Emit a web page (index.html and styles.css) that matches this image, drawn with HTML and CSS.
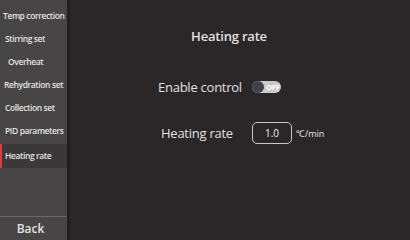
FILE: index.html
```html
<!DOCTYPE html>
<html>
<head>
<meta charset="utf-8">
<link rel="stylesheet" href="styles.css">
</head>
<body>
<div class="app">
  <nav class="sidebar">
    <ul class="menu">
      <li class="item pad-3">Temp correction</li>
      <li class="item pad-5">Stirring set</li>
      <li class="item pad-8">Overheat</li>
      <li class="item pad-4">Rehydration set</li>
      <li class="item pad-5">Collection set</li>
      <li class="item pad-5">PID parameters</li>
      <li class="item pad-5 active">Heating rate</li>
    </ul>
    <div class="back">Back</div>
  </nav>
  <main class="content">
    <h1 class="title">Heating rate</h1>
    <div class="row row-enable">
      <span class="label">Enable control</span>
      <span class="toggle"><span class="knob"></span><span class="toggle-text">OFF</span></span>
    </div>
    <div class="row row-rate">
      <span class="label">Heating rate</span>
      <span class="input">1.0</span>
      <span class="unit">℃/min</span>
    </div>
  </main>
</div>
</body>
</html>
```
FILE: styles.css
```css
html, body {
  margin: 0;
  padding: 0;
  width: 410px;
  height: 240px;
  overflow: hidden;
  background: #2b2728;
  font-family: "Open Sans", "Noto Sans", sans-serif;
}
.app {
  display: flex;
  width: 410px;
  height: 240px;
}
.sidebar {
  width: 67px;
  flex: none;
  background: #474545;
  border-right: 3px solid #231f20;
  display: flex;
  flex-direction: column;
}
.menu {
  list-style: none;
  margin: 0;
  padding: 4px 0 0 0;
  flex: 1;
}
.item {
  height: 23px;
  line-height: 23px;
  font-size: 8.5px;
  font-weight: 600;
  letter-spacing: -0.4px;
  color: #e2e2e2;
  white-space: nowrap;
}
.pad-3 { padding-left: 3px; }
.pad-4 { padding-left: 4px; }
.pad-5 { padding-left: 5px; }
.pad-8 { padding-left: 8px; }
.item.active {
  margin-top: 2px;
  height: 24px;
  line-height: 24px;
  background: #3b3839;
  border-left: 2px solid #e0393e;
  padding-left: 3px;
}
.back {
  height: 23px;
  border-top: 1px solid #6a6868;
  text-align: center;
  line-height: 23px;
  font-size: 12px;
  font-weight: 600;
  color: #e2e2e2;
  padding-right: 6px;
}
.content {
  flex: 1;
  display: flex;
  flex-direction: column;
  color: #e0e0e0;
}
.title {
  margin: 27px 0 0 0;
  padding-right: 22px;
  text-align: center;
  font-size: 13px;
  font-weight: 600;
  line-height: 18px;
  letter-spacing: -0.2px;
}
.row {
  display: flex;
  align-items: center;
}
.row-enable {
  margin-top: 32px;
  padding-left: 88px;
  height: 20px;
}
.row-rate {
  margin-top: 25px;
  padding-left: 91px;
  height: 22px;
}
.label {
  font-size: 13px;
  font-weight: 500;
  letter-spacing: -0.25px;
}
.row-enable .label { width: 94px; }
.row-rate .label { width: 91px; }
.toggle {
  width: 29px;
  height: 12px;
  border-radius: 6px;
  background: #c9c9c9;
  display: flex;
  align-items: center;
  position: relative;
}
.knob {
  width: 12px;
  height: 12px;
  border-radius: 50%;
  background: #3f4347;
}
.toggle-text {
  font-size: 7.5px;
  font-weight: 700;
  color: #ffffff;
  margin-left: 2px;
  letter-spacing: -0.2px;
}
.input {
  width: 38px;
  height: 20px;
  border: 1px solid #c8c8c8;
  border-radius: 5px;
  text-align: center;
  line-height: 20px;
  font-size: 10px;
  color: #f0f0f0;
}
.unit {
  margin-left: 4px;
  font-size: 9px;
  color: #e8e8e8;
}
```
